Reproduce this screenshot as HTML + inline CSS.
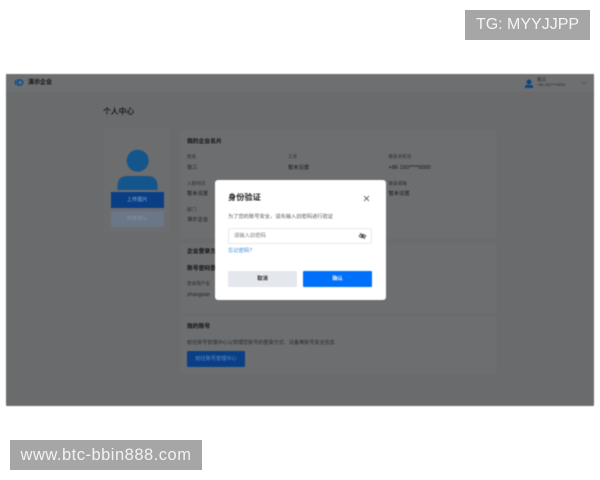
<!DOCTYPE html>
<html lang="zh-CN"><head><meta charset="utf-8"><title>个人中心</title>
<style>
*{box-sizing:border-box;margin:0;padding:0}
html,body{width:600px;height:480px;overflow:hidden;background:#fff}
body{font-family:"Liberation Sans","Noto Sans CJK SC",sans-serif;position:relative}
.a{position:absolute;white-space:nowrap;line-height:1}
#app{position:absolute;left:6px;top:74px;width:588px;height:332px;background:#696b6c;border-radius:1px}
#page{position:absolute;left:0;top:0;width:600px;height:480px;filter:blur(.4px)}
.card{position:absolute;background:#6c6e6f;border-radius:3px}
.l{font-size:4.600px;color:#2c2d2e;margin-top:.8px}
.v{font-size:5.300px;color:#17181a;margin-top:.8px}
.h{font-size:5.800px;font-weight:700;color:#111;margin-top:.8px}
#m{position:absolute;left:214.500px;top:179.500px;width:171px;height:120px;background:#fff;border-radius:3px}
</style></head><body>
<div id="page">
<div id="app"></div>
<div class="a" style="left:6px;top:74px;width:588px;height:18px;background:#6d6f70"></div>
<svg class="a" style="left:15px;top:79px" width="9" height="7" viewBox="0 0 9 7"><rect x="0" y="1" width="1.600" height="5" fill="#0d4d8a"/><path d="M3 1h2.200a2.500 2.500 0 0 1 0 5H3z" fill="none" stroke="#0d4d8a" stroke-width="1.500"/></svg>
<div class="a" style="left:28px;top:80px;font-size:6px;font-weight:700;color:#111">演示企业</div>
<svg class="a" style="left:524px;top:79px" width="10" height="10" viewBox="0 0 10 10"><circle cx="5" cy="3" r="2.500" fill="#0c4680"/><path d="M1 9V7.600Q1 6 3 6h4q2 0 2 1.600V9z" fill="#0c4680"/></svg>
<div class="a" style="left:537px;top:78px;font-size:4.600px;color:#222">张三</div>
<div class="a" style="left:537px;top:83.500px;font-size:3.800px;color:#2a2b2c">+86 150****0000</div>
<svg class="a" style="left:581px;top:80px" width="6" height="6" viewBox="0 0 6 6"><path d="M1 2l2 2 2-2" fill="none" stroke="#4d4f50" stroke-width=".8"/></svg>

<div class="a" style="left:103px;top:107.500px;font-size:7.800px;font-weight:500;color:#111">个人中心</div>

<div class="card" style="left:103px;top:128px;width:67px;height:105px;background:#6b6d6e"></div>
<svg class="a" style="left:115px;top:148px" width="45" height="44" viewBox="0 0 45 44"><circle cx="22.700" cy="12.700" r="11" fill="#14558c"/><path d="M2.500 42V38Q2.500 28 13 28H32Q42.500 28 42.500 38V42z" fill="#14558c"/></svg>
<div class="a" style="left:111px;top:192px;width:52.500px;height:16px;background:#0a3f86;color:#8ca6cc;font-size:5.200px;line-height:17px;text-align:center">上传图片</div>
<div class="a" style="left:111px;top:211px;width:52.500px;height:15.500px;background:#6b7788;border-radius:1px;color:#8592a4;font-size:5.200px;line-height:16.500px;text-align:center">恢复默认</div>

<div class="card" style="left:180px;top:130px;width:317px;height:109px"></div>
<div class="card" style="left:180px;top:243px;width:317px;height:71px"></div>
<div class="card" style="left:180px;top:316px;width:317px;height:58px"></div>

<div class="a h" style="left:187px;top:138.800px">我的企业名片</div>
<div class="a l" style="left:187px;top:154.700px">姓名</div>
<div class="a v" style="left:187px;top:165px">张三</div>
<div class="a l" style="left:288px;top:154.700px">工号</div>
<div class="a v" style="left:288px;top:165px">暂未设置</div>
<div class="a l" style="left:388.500px;top:154.700px">联系手机号</div>
<div class="a v" style="left:388.500px;top:165px;font-size:5.700px">+86 150****0000</div>
<div class="a l" style="left:187px;top:181px">入职时间</div>
<div class="a v" style="left:187px;top:191.400px">暂未设置</div>
<div class="a l" style="left:388.500px;top:181px">联系邮箱</div>
<div class="a v" style="left:388.500px;top:191.400px">暂未设置</div>
<div class="a l" style="left:187px;top:207.700px">部门</div>
<div class="a v" style="left:187px;top:217.400px">演示企业</div>
<div class="a h" style="left:187px;top:249.200px">企业登录方式</div>
<div class="a h" style="left:187px;top:265.800px">账号密码登录</div>
<div class="a l" style="left:187px;top:281.700px">登录用户名</div>
<div class="a v" style="left:187px;top:292.400px;color:#1f2021">zhangsan</div>
<div class="a h" style="left:187px;top:324.200px">我的账号</div>
<div class="a" style="left:187px;top:340.600px;font-size:5.100px;color:#2b2c2d">前往账号管理中心以管理您账号的登录方式、设备等账号安全信息</div>
<div class="a" style="left:187px;top:350.500px;width:58px;height:16px;background:#0a3f86;border-radius:1.500px;color:#5f8cc4;font-size:5.200px;line-height:17px;text-align:center">前往账号管理中心</div>

<div id="m">
<div class="a" style="left:13.500px;top:14.500px;font-size:8.200px;font-weight:700;color:#1a1c1f">身份验证</div>
<svg class="a" style="left:147.500px;top:14px" width="9" height="9" viewBox="0 0 9 9"><path d="M2 2l5 5M7 2l-5 5" stroke="#44474c" stroke-width=".8" fill="none"/></svg>
<div class="a" style="left:13.500px;top:35.800px;font-size:5.250px;color:#55585e">为了您的账号安全，请先输入旧密码进行验证</div>
<div class="a" style="left:13.500px;top:48.500px;width:144px;height:16px;background:#fff;border:1px solid #e6e8ec;border-radius:2px"></div>
<div class="a" style="left:19.500px;top:54.500px;font-size:5.300px;color:#777a80">请输入旧密码</div>
<svg class="a" style="left:143px;top:52.500px" width="9" height="8" viewBox="0 0 9 8"><path d="M1 4Q4.500 .5 8 4Q4.500 7.500 1 4z" fill="none" stroke="#3d4046" stroke-width=".8"/><circle cx="4.500" cy="4" r="1.300" fill="#3d4046"/><path d="M2 1l5 6" stroke="#3d4046" stroke-width=".7"/></svg>
<div class="a" style="left:13.500px;top:69.300px;font-size:5.300px;color:#3a87dc">忘记密码?</div>
<div class="a" style="left:13.500px;top:91.500px;width:69px;height:16px;background:#e5e7ee;border-radius:1px;color:#26282c;font-size:5.300px;font-weight:700;line-height:17.500px;text-align:center">取消</div>
<div class="a" style="left:88.500px;top:91.500px;width:69px;height:16px;background:#0070fa;border-radius:1px;color:#e8f2ff;font-size:5.300px;font-weight:700;line-height:17.500px;text-align:center">确认</div>
</div>
</div>
<div class="a" style="left:465px;top:10px;width:125px;height:30px;background:#a6a6a6;color:#f4f4f4;font-size:16px;line-height:30px;text-align:center">TG: MYYJJPP</div>
<div class="a" style="left:10px;top:440px;width:192px;height:30px;background:#a6a6a6;color:#f2f2f2;font-size:16.500px;letter-spacing:.5px;line-height:30px;text-align:center">www.btc-bbin888.com</div>
</body></html>
